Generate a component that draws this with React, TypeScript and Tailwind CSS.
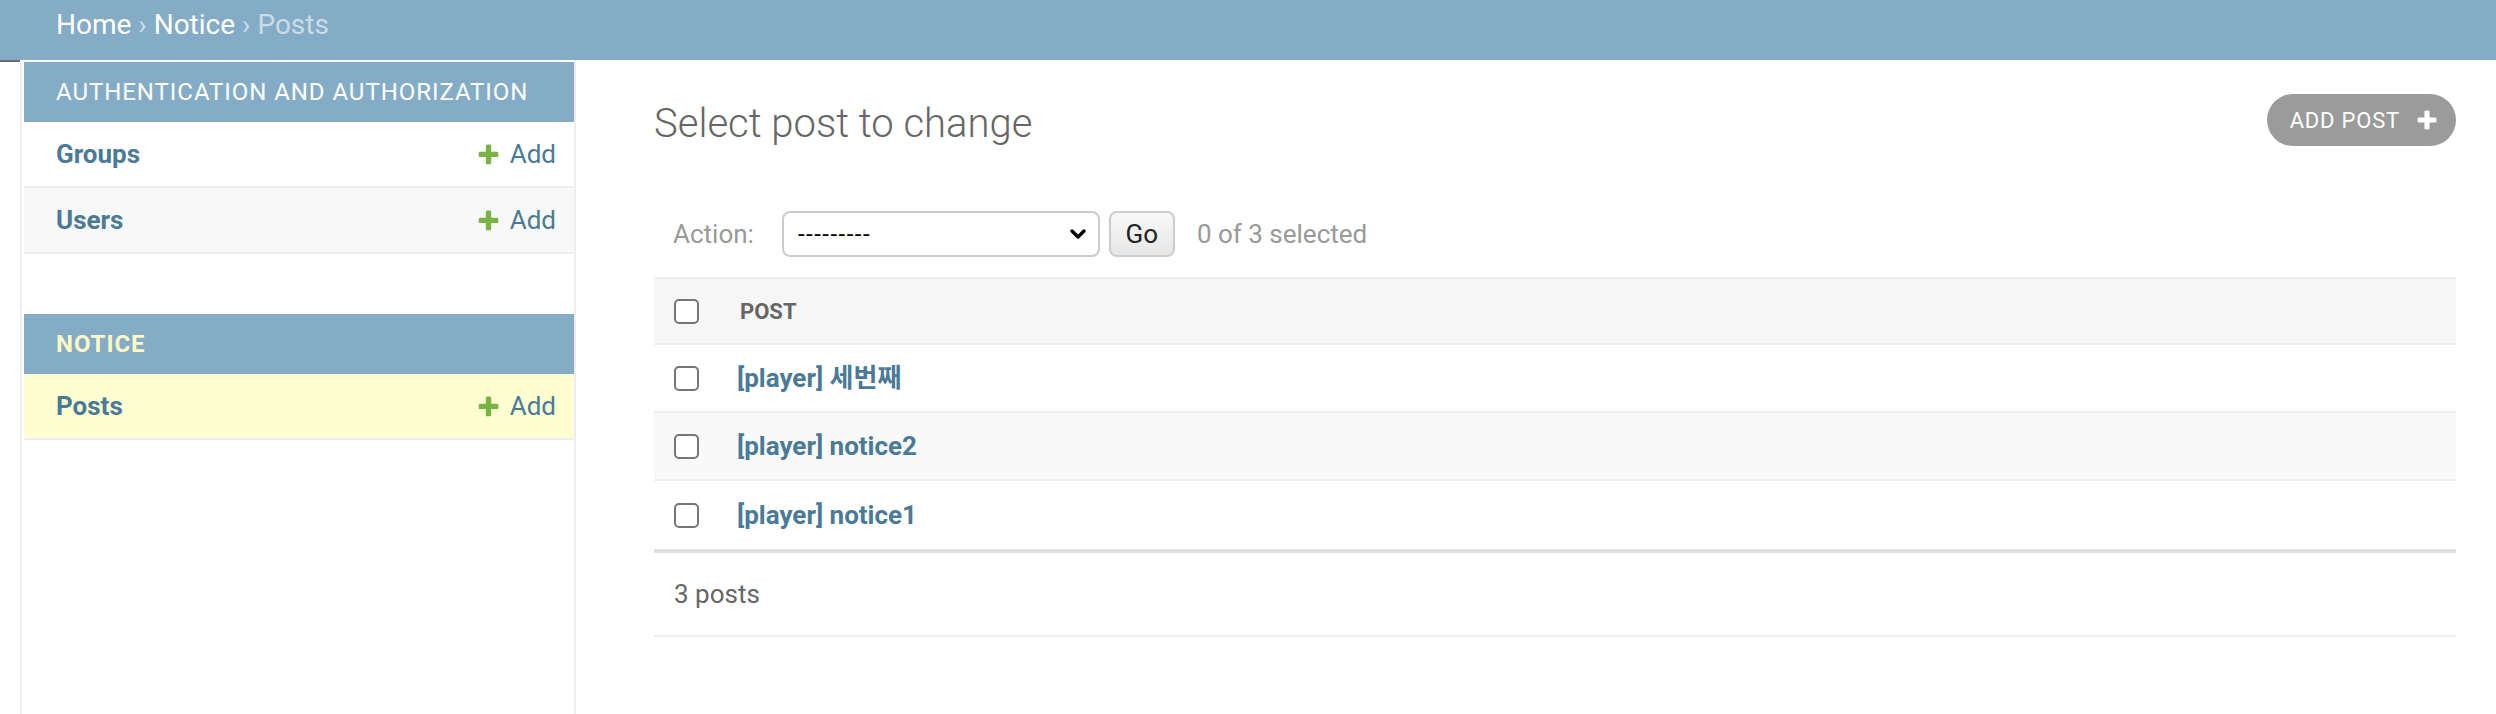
import React from 'react';

const LINK = 'text-[#4a7a97]';

const PlusIcon = ({ className }: { className?: string }) => (
  <svg className={className} viewBox="0 0 1792 1792" fill="currentColor">
    <path d="M1600 796v192q0 40-28 68t-68 28h-416v416q0 40-28 68t-68 28h-192q-40 0-68-28t-28-68v-416h-416q-40 0-68-28t-28-68v-192q0-40 28-68t68-28h416v-416q0-40 28-68t68-28h192q40 0 68 28t28 68v416h416q40 0 68 28t28 68z" />
  </svg>
);

const Checkbox = () => (
  <div className="w-[25px] h-[25px] rounded-[5px] border-2 border-[#767676] bg-white shrink-0" />
);

interface SidebarModel {
  name: string;
  current?: boolean;
}

const SidebarModule = ({ title, models, current }: { title: string; models: SidebarModel[]; current?: boolean }) => (
  <div className="mb-[60px]">
    <div className="h-[60px] bg-[#85acc6] flex items-center pl-[32px]">
      <span className={`text-[24px] uppercase tracking-[0.95px] ${current ? 'text-[#fdf8c4] font-bold' : 'text-white'}`}>
        {title}
      </span>
    </div>
    {models.map((m, i) => (
      <div
        key={m.name}
        className={`h-[66px] flex items-center justify-between pl-[32px] pr-[18px] border-b-2 border-[#eeeeee] ${
          m.current ? 'bg-[#fefed2]' : i % 2 === 1 ? 'bg-[#f8f8f8]' : 'bg-white'
        }`}
      >
        <span className={`text-[26px] font-bold ${LINK}`}>{m.name}</span>
        <span className="flex items-center gap-[9px]">
          <PlusIcon className="w-[25px] h-[25px] text-[#78b444]" />
          <span className={`text-[26px] ${LINK}`}>Add</span>
        </span>
      </div>
    ))}
  </div>
);

const posts = ['[player] 세번째', '[player] notice2', '[player] notice1'];

export default function App() {
  return (
    <div className="w-full h-[714px] overflow-hidden bg-white flex flex-col [font-family:Roboto,'Noto_Sans_CJK_KR',sans-serif]">
      {/* Breadcrumbs */}
      <div className="h-[60px] shrink-0 bg-[#85acc6] pl-[56px] pt-[8px] text-[28px] leading-[33px]">
        <span className="text-white">Home</span>
        <span className="text-[#c9dce8]"> › </span>
        <span className="text-white">Notice</span>
        <span className="text-[#c9dce8]"> › Posts</span>
      </div>

      <div className="flex flex-1 min-h-0">
        {/* Sidebar toggle */}
        <div className="w-[22px] shrink-0 border-r-2 border-[#eeeeee]">
          <div className="h-[2px] w-[20px] bg-[#6b6b6b]" />
        </div>

        {/* Sidebar */}
        <div className="w-[554px] shrink-0 pl-[2px] pt-[2px] border-r-2 border-[#eeeeee]">
          <SidebarModule
            title="Authentication and Authorization"
            models={[{ name: 'Groups' }, { name: 'Users' }]}
          />
          <SidebarModule title="Notice" current models={[{ name: 'Posts', current: true }]} />
        </div>

        {/* Content */}
        <div className="flex-1 min-w-0 pl-[78px] pr-[40px] pt-[34px]">
          <div className="flex items-start justify-between h-[60px]">
            <h1 className="text-[40px] leading-[60px] font-light text-[#666666]">Select post to change</h1>
            <button className="h-[52px] rounded-full bg-[#9b9b9b] text-white flex items-center pl-[23px] pr-[17px] gap-[15px]">
              <span className="text-[22px] tracking-[0.8px] uppercase">Add post</span>
              <PlusIcon className="w-[24px] h-[24px] text-white" />
            </button>
          </div>

          {/* Actions */}
          <div className="mt-[57px] h-[46px] flex items-center pl-[19px]">
            <span className="text-[26px] text-[#999999]">Action:</span>
            <div className="ml-[28px] w-[318px] h-[46px] rounded-[8px] border-2 border-[#cccccc] bg-white flex items-center justify-between pl-[14px] pr-[10px]">
              <span className="text-[24px] text-black tracking-[1.5px]">---------</span>
              <svg className="w-[20px] h-[20px]" viewBox="0 0 20 20" fill="none" stroke="black" strokeWidth="3.4" strokeLinecap="round" strokeLinejoin="round">
                <path d="M4 7l6 6 6-6" />
              </svg>
            </div>
            <div className="ml-[9px] w-[66px] h-[46px] rounded-[8px] border-2 border-[#cccccc] bg-gradient-to-b from-[#f8f8f8] to-[#e6e6e6] flex items-center justify-center">
              <span className="text-[26px] text-[#222222]">Go</span>
            </div>
            <span className="ml-[22px] text-[26px] text-[#999999]">0 of 3 selected</span>
          </div>

          {/* Table */}
          <div className="mt-[20px]">
            <div className="h-[68px] bg-[#f6f6f6] border-t-2 border-b-2 border-[#eeeeee] flex items-center pl-[20px]">
              <Checkbox />
              <span className="ml-[41px] text-[22px] font-bold text-[#666666] uppercase">Post</span>
            </div>
            {posts.map((p, i) => (
              <div
                key={p}
                className={`h-[68px] flex items-center pl-[20px] ${i < posts.length - 1 ? 'border-b-2 border-[#eeeeee]' : ''} ${
                  i % 2 === 1 ? 'bg-[#f9f9f9]' : 'bg-white'
                }`}
              >
                <Checkbox />
                <span className={`ml-[38px] text-[26px] font-bold ${LINK}`}>{p}</span>
              </div>
            ))}
            <div className="h-[4px] bg-[#e0e0e0]" />
            <div className="h-[84px] flex items-center pl-[20px] border-b-2 border-[#eeeeee]">
              <span className="text-[26px] text-[#666666]">3 posts</span>
            </div>
          </div>
        </div>
      </div>
    </div>
  );
}
